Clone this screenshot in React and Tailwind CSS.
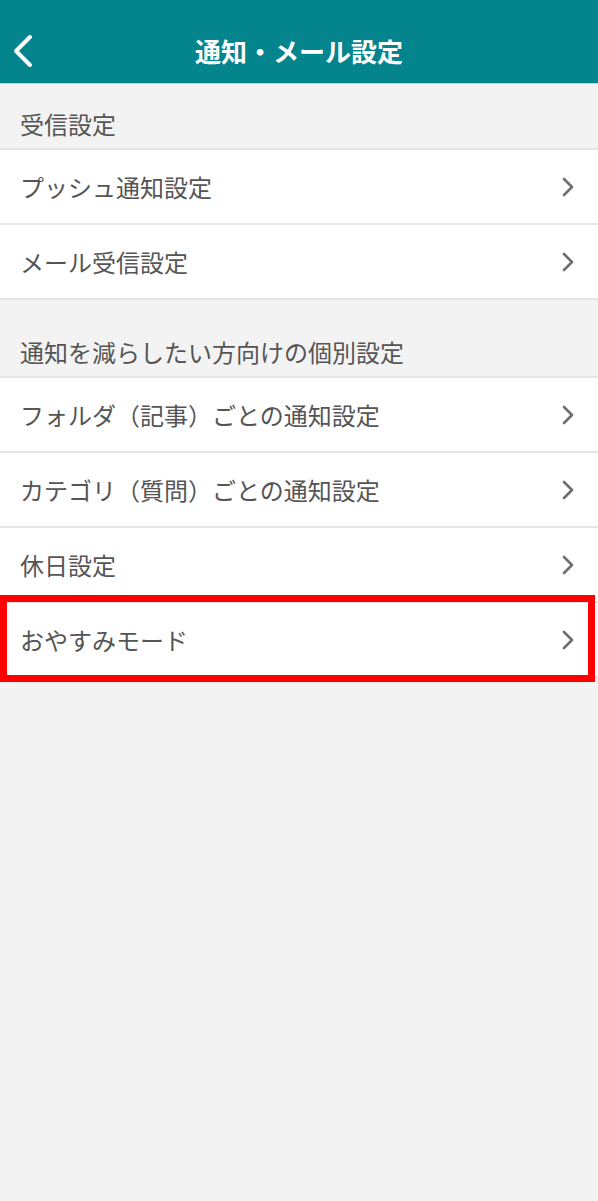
import React from 'react';

const font = { fontFamily: '"Noto Sans CJK JP", "Noto Sans", sans-serif' };

const Chevron = () => (
  <svg width="14" height="22" viewBox="0 0 14 22" className="shrink-0">
    <path d="M3 3 L11 11 L3 19" fill="none" stroke="#6f6f6f" strokeWidth="2.6" strokeLinecap="round" strokeLinejoin="round" />
  </svg>
);

const Row = ({ label }) => (
  <div className="h-[75px] bg-white border-b-2 border-[#e6e6e6] flex items-center justify-between pl-[20px] pr-[23px]">
    <span className="text-[24px] leading-[24px] text-[#555555]">{label}</span>
    <Chevron />
  </div>
);

const SectionHeader = ({ label, h }) => (
  <div className={`${h} bg-[#f3f3f3] border-b-2 border-[#e6e6e6] flex items-end pl-[20px] pb-[12px]`}>
    <span className="text-[24px] leading-[24px] text-[#555555]">{label}</span>
  </div>
);

export default function App() {
  return (
    <div className="w-[598px] min-h-[1201px] bg-[#f3f3f3]" style={font}>
      <div className="h-[84px] bg-[#04848d] border-b border-[#cfcfcf] relative flex items-center justify-center pt-[18px]">
        <svg width="24" height="34" viewBox="0 0 24 34" className="absolute left-[11px] top-[34px]">
          <path d="M19 3 L5 17 L19 31" fill="none" stroke="#ffffff" strokeWidth="4" strokeLinecap="round" strokeLinejoin="round" />
        </svg>
        <h1 className="text-[26px] font-bold text-white leading-none">通知・メール設定</h1>
      </div>

      <SectionHeader label="受信設定" h="h-[66px]" />
      <Row label="プッシュ通知設定" />
      <Row label="メール受信設定" />

      <SectionHeader label="通知を減らしたい方向けの個別設定" h="h-[78px]" />
      <Row label="フォルダ（記事）ごとの通知設定" />
      <Row label="カテゴリ（質問）ごとの通知設定" />
      <Row label="休日設定" />
      <div className="relative">
        <Row label="おやすみモード" />
        <div className="absolute -top-[8px] -bottom-[4px] left-0 right-[3px] border-[7px] border-[#ff0000] pointer-events-none" />
      </div>
    </div>
  );
}
